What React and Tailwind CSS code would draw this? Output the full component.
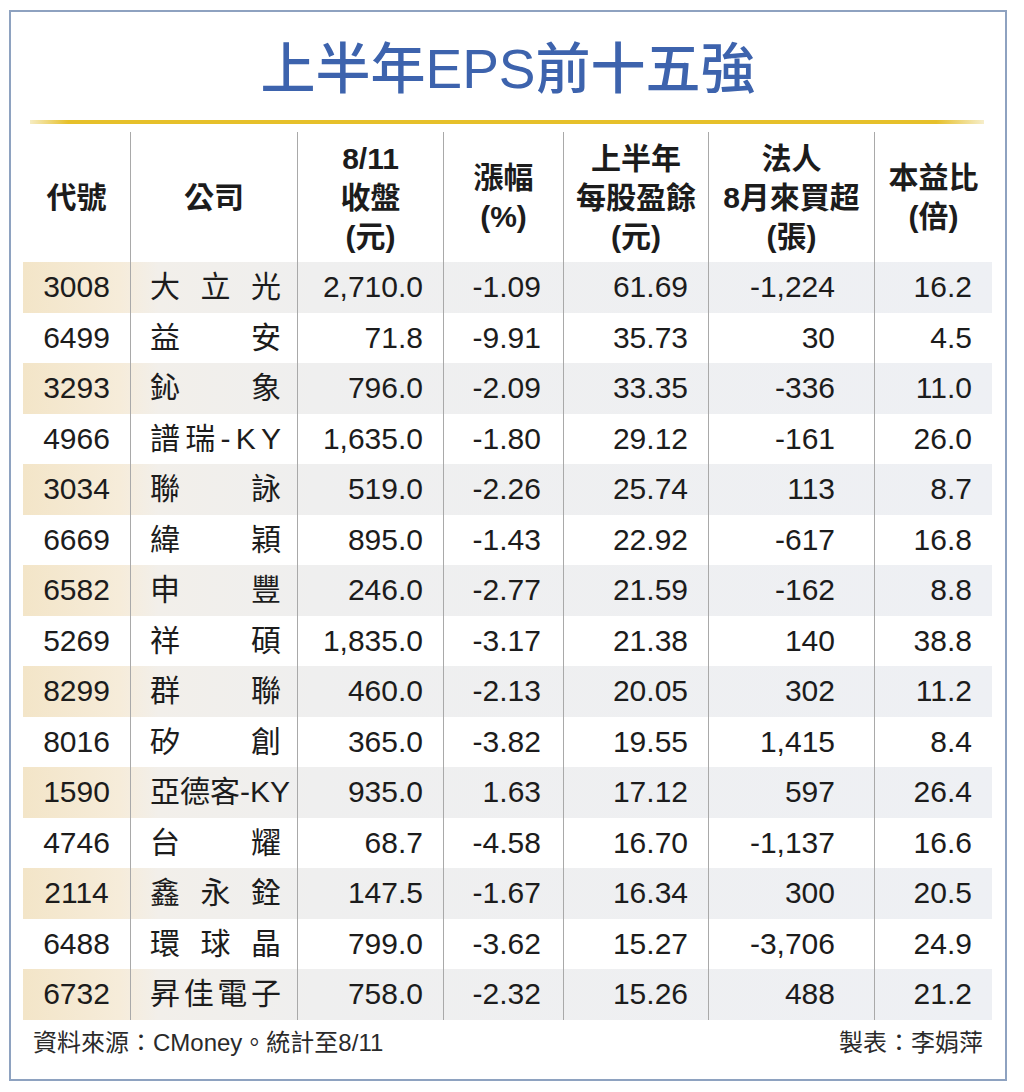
import React from "react";

const rows = [
  ["3008", "大立光", "2,710.0", "-1.09", "61.69", "-1,224", "16.2"],
  ["6499", "益安", "71.8", "-9.91", "35.73", "30", "4.5"],
  ["3293", "鈊象", "796.0", "-2.09", "33.35", "-336", "11.0"],
  ["4966", "譜瑞-KY", "1,635.0", "-1.80", "29.12", "-161", "26.0"],
  ["3034", "聯詠", "519.0", "-2.26", "25.74", "113", "8.7"],
  ["6669", "緯穎", "895.0", "-1.43", "22.92", "-617", "16.8"],
  ["6582", "申豐", "246.0", "-2.77", "21.59", "-162", "8.8"],
  ["5269", "祥碩", "1,835.0", "-3.17", "21.38", "140", "38.8"],
  ["8299", "群聯", "460.0", "-2.13", "20.05", "302", "11.2"],
  ["8016", "矽創", "365.0", "-3.82", "19.55", "1,415", "8.4"],
  ["1590", "亞德客-KY", "935.0", "1.63", "17.12", "597", "26.4"],
  ["4746", "台耀", "68.7", "-4.58", "16.70", "-1,137", "16.6"],
  ["2114", "鑫永銓", "147.5", "-1.67", "16.34", "300", "20.5"],
  ["6488", "環球晶", "799.0", "-3.62", "15.27", "-3,706", "24.9"],
  ["6732", "昇佳電子", "758.0", "-2.32", "15.26", "488", "21.2"],
];

const headers = [
  ["代號"],
  ["公司"],
  ["8/11", "收盤", "(元)"],
  ["漲幅", "(%)"],
  ["上半年", "每股盈餘", "(元)"],
  ["法人", "8月來買超", "(張)"],
  ["本益比", "(倍)"],
];

const cols = "grid grid-cols-[107px_167px_146px_120px_145px_166px_118px]";
const sep = "border-l border-[#a9a9a9]";

const App = () => {
  return (
    <div className="w-[1024px] h-[1092px] bg-white pt-[10px] pl-[9px] font-['Liberation_Sans','Noto_Sans_CJK_TC',sans-serif] text-[#1c1c1c]">
      <div className="w-[998px] h-[1071px] border-2 border-[#8ea2c0] flex flex-col">
        {/* title */}
        <div className="pt-[28px] text-center text-[55px] leading-[58px] font-medium text-[#3d63ad]">
          上半年EPS前十五強
        </div>
        <div className="mt-[22px] ml-[19px] w-[954px] h-[4px] bg-[linear-gradient(to_right,#f6ecc2_0%,#e6c02a_4%,#e6c02a_95%,#f6eecb_100%)]" />

        {/* table */}
        <div className="mt-[4px] ml-[12px] w-[969px]">
          <div className={`${cols} h-[134px] pt-1`}>
            {headers.map((lines, i) => (
              <div
                key={i}
                className={`flex flex-col items-center justify-center text-[30px] leading-[39px] font-bold ${i > 0 ? sep : ""}`}
              >
                {lines.map((l) => (
                  <span key={l}>{l}</span>
                ))}
              </div>
            ))}
          </div>

          {rows.map((r, idx) => (
            <div
              key={r[0]}
              className={`${cols} h-[50.5px] text-[30px] leading-none ${
                idx % 2 === 0
                  ? "bg-[linear-gradient(to_right,#f3e5c8_0%,#f6ecda_10%,#f2efea_14%,#efefef_30%,#eef0f4_100%)]"
                  : "bg-white"
              }`}
            >
              <div className="flex items-center justify-center">{r[0]}</div>
              <div className={`${sep} flex items-center justify-between pl-[19px] pr-[16px]`}>
                {r[1].split("").map((c, k) => (
                  <span key={k}>{c}</span>
                ))}
              </div>
              <div className={`${sep} flex items-center justify-end pr-[20px]`}>{r[2]}</div>
              <div className={`${sep} flex items-center justify-end pr-[22px]`}>{r[3]}</div>
              <div className={`${sep} flex items-center justify-end pr-[20px]`}>{r[4]}</div>
              <div className={`${sep} flex items-center justify-end pr-[39px]`}>{r[5]}</div>
              <div className={`${sep} flex items-center justify-end pr-[20px]`}>{r[6]}</div>
            </div>
          ))}
        </div>

        {/* footer */}
        <div className="mt-[8px] px-[22px] flex justify-between text-[24px] leading-[30px] text-[#2a2a2a]">
          <span>資料來源：CMoney。統計至8/11</span>
          <span>製表：李娟萍</span>
        </div>
      </div>
    </div>
  );
};

export default App;
